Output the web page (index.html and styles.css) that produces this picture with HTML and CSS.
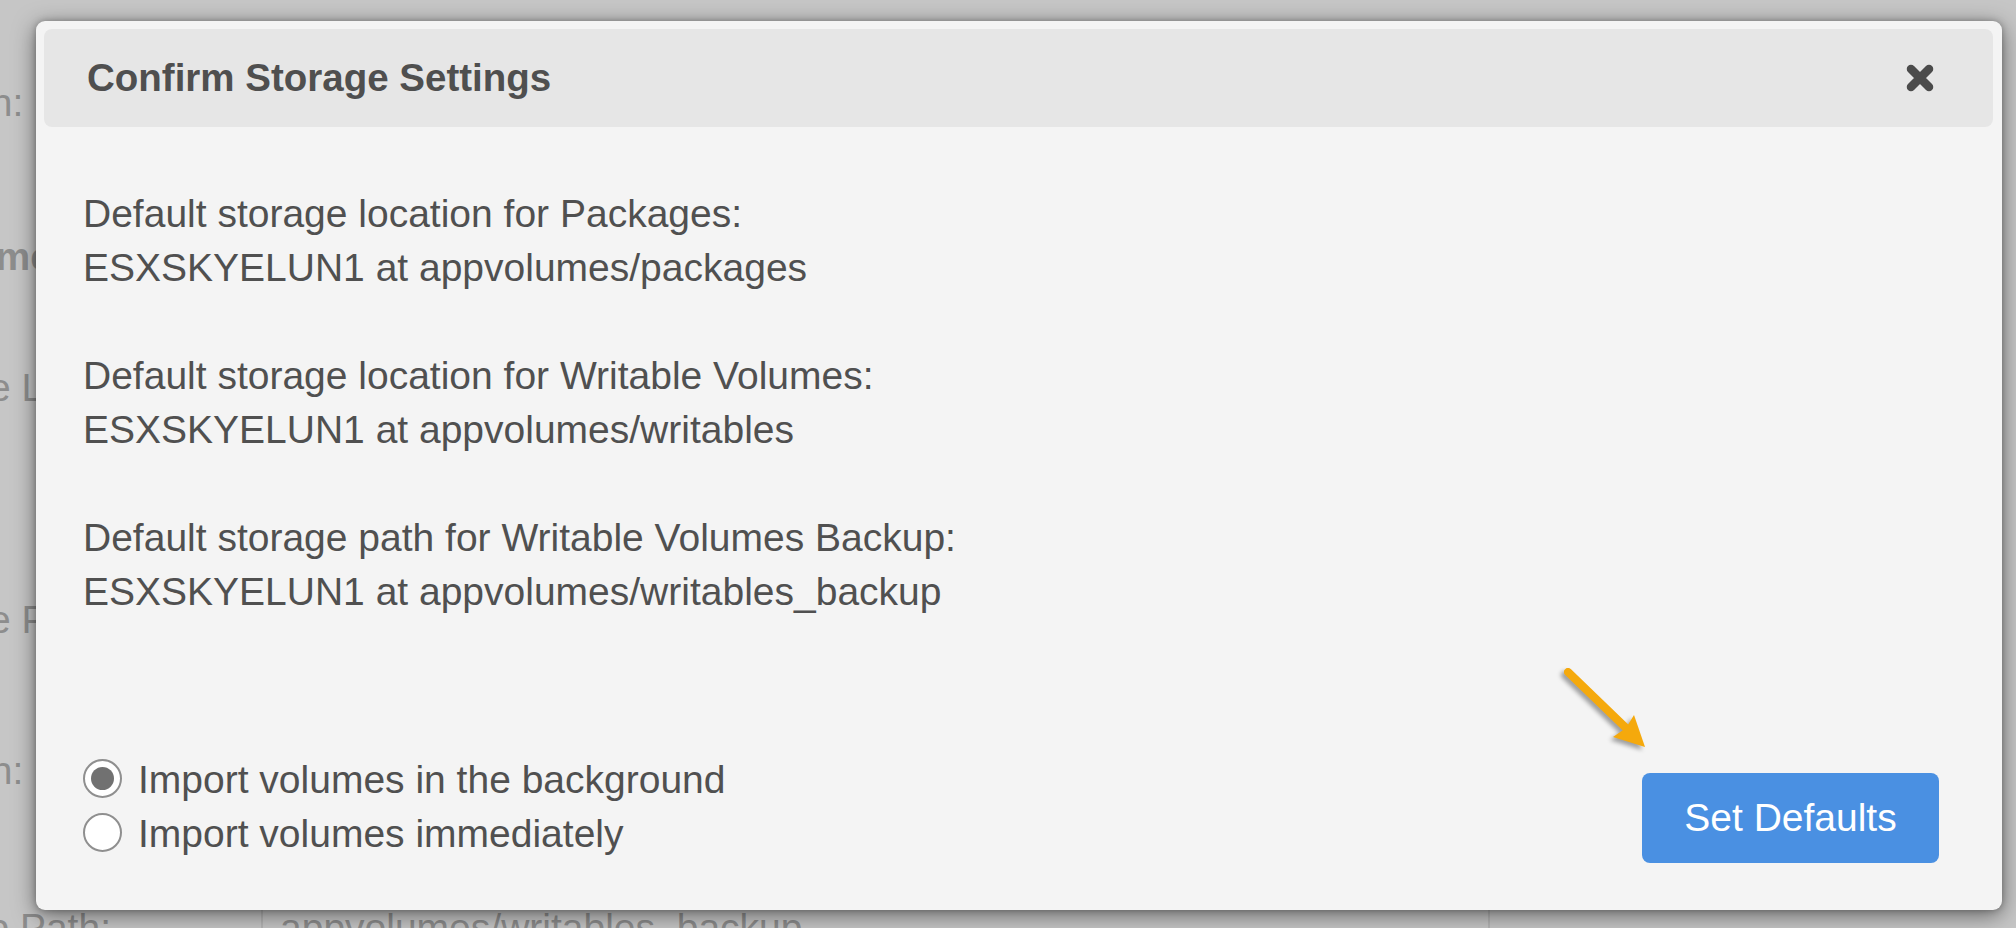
FILE: index.html
```html
<!DOCTYPE html>
<html lang="en">
<head>
<meta charset="utf-8">
<title>Confirm Storage Settings</title>
<link rel="stylesheet" href="styles.css">
</head>
<body>
<div class="page">
  <div class="bg-row row1"><span class="lbl">Location:</span></div>
  <div class="bg-row row2"><span class="lbl heading">Volumes</span></div>
  <div class="bg-row row3"><span class="lbl">Storage Location</span></div>
  <div class="bg-row row4"><span class="lbl">Storage Path</span></div>
  <div class="bg-row row5"><span class="lbl">Location:</span></div>
  <div class="bg-row row6">
    <span class="lbl path-lbl">Backup Path:</span>
    <div class="bg-input">appvolumes/writables_backup</div>
  </div>
</div>

<div class="modal">
  <div class="modal-header">
    <h2 class="modal-title">Confirm Storage Settings</h2>
    <button class="close" aria-label="Close">
      <svg width="28" height="28" viewBox="0 0 28 28" aria-hidden="true">
        <path d="M5 5 L23 23 M23 5 L5 23" stroke="#4b4b4b" stroke-width="8.5" stroke-linecap="round" fill="none"/>
      </svg>
    </button>
  </div>
  <div class="modal-body">
    <p>Default storage location for Packages:<br>ESXSKYELUN1 at appvolumes/packages</p>
    <p>Default storage location for Writable Volumes:<br>ESXSKYELUN1 at appvolumes/writables</p>
    <p>Default storage path for Writable Volumes Backup:<br>ESXSKYELUN1 at appvolumes/writables_backup</p>
  </div>
  <div class="modal-footer">
    <div class="radios">
      <label class="radio"><span class="dot checked"></span>Import volumes in the background</label>
      <label class="radio"><span class="dot"></span>Import volumes immediately</label>
    </div>
    <button class="btn-primary">Set Defaults</button>
  </div>
  <svg class="callout" width="110" height="110" viewBox="0 0 110 110" aria-hidden="true">
    <line x1="13" y1="12" x2="70" y2="67" stroke="#f5a90c" stroke-width="8" stroke-linecap="round"/>
    <polygon points="90,87 79,55 71,68 58,77" fill="#f5a90c"/>
  </svg>
</div>
</body>
</html>
```
FILE: styles.css
```css
html, body {
  margin: 0;
  padding: 0;
}
body {
  width: 2016px;
  height: 928px;
  overflow: hidden;
  background: #c6c6c6;
  font-family: "Liberation Sans", Arial, sans-serif;
  position: relative;
}

/* background page (behind the backdrop) */
.page {
  display: flex;
  flex-direction: column;
  color: #8d8d8d;
  font-size: 39px;
}
.bg-row {
  height: 54px;
  line-height: 54px;
  display: flex;
  white-space: nowrap;
}
.row1 { margin-top: 76px; }
.row2 { margin-top: 100px; }
.row3 { margin-top: 77px; }
.row4 { margin-top: 178px; }
.row5 { margin-top: 97px; }
.row6 { margin-top: 103px; }

.row1 .lbl, .row5 .lbl { margin-left: -135px; }
.row2 .lbl { margin-left: -86px; font-weight: bold; }
.row3 .lbl, .row4 .lbl { margin-left: -126px; }
.path-lbl { margin-left: -121px; width: 382px; flex: none; }
.bg-input {
  width: 1208px;
  padding-left: 17px;
  border-left: 2px solid #b5b5b5;
  border-right: 2px solid #b5b5b5;
}

/* modal */
.modal {
  position: absolute;
  left: 36px;
  top: 21px;
  width: 1966px;
  height: 889px;
  box-sizing: border-box;
  background: #f4f4f4;
  border-radius: 9px;
  box-shadow: 0 5px 22px rgba(0, 0, 0, 0.5), 0 0 6px rgba(0, 0, 0, 0.25);
  padding: 8px 9px 0 8px;
  display: flex;
  flex-direction: column;
  color: #505050;
}
.modal-header {
  height: 98px;
  background: #e6e6e6;
  border-radius: 8px;
  display: flex;
  align-items: center;
  justify-content: space-between;
  padding: 0 59px 0 43px;
}
.modal-title {
  margin: 0;
  font-size: 38.5px;
  font-weight: bold;
  color: #4f4f4f;
  line-height: 98px;
}
.close {
  border: 0;
  background: none;
  padding: 0;
  width: 28px;
  height: 28px;
  display: flex;
}

.modal-body {
  flex: 1;
  padding: 60px 0 0 39px;
  font-size: 39px;
  line-height: 54px;
}
.modal-body p {
  margin: 0 0 54px 0;
}

.modal-footer {
  display: flex;
  justify-content: space-between;
  align-items: flex-end;
  padding: 0 54px 47px 39px;
}
.radios {
  display: flex;
  flex-direction: column;
  padding-bottom: 2px;
}
.radio {
  display: flex;
  align-items: center;
  height: 54px;
  font-size: 39px;
  color: #505050;
}
.dot {
  width: 35px;
  height: 35px;
  border: 2px solid #8f8f8f;
  border-radius: 50%;
  background: #fff;
  margin-right: 16px;
  margin-top: -4px;
  display: flex;
  align-items: center;
  justify-content: center;
  flex: none;
}
.dot.checked::after {
  content: "";
  width: 23px;
  height: 23px;
  border-radius: 50%;
  background: #717171;
}

.btn-primary {
  width: 297px;
  height: 90px;
  border: 0;
  border-radius: 8px;
  background: #4a90e2;
  color: #fff;
  font-family: "Liberation Sans", Arial, sans-serif;
  font-size: 39px;
  padding: 0;
}

.callout {
  position: absolute;
  left: 1519px;
  top: 639px;
  filter: drop-shadow(-3px 3px 2px rgba(0, 0, 0, 0.35));
}
```
